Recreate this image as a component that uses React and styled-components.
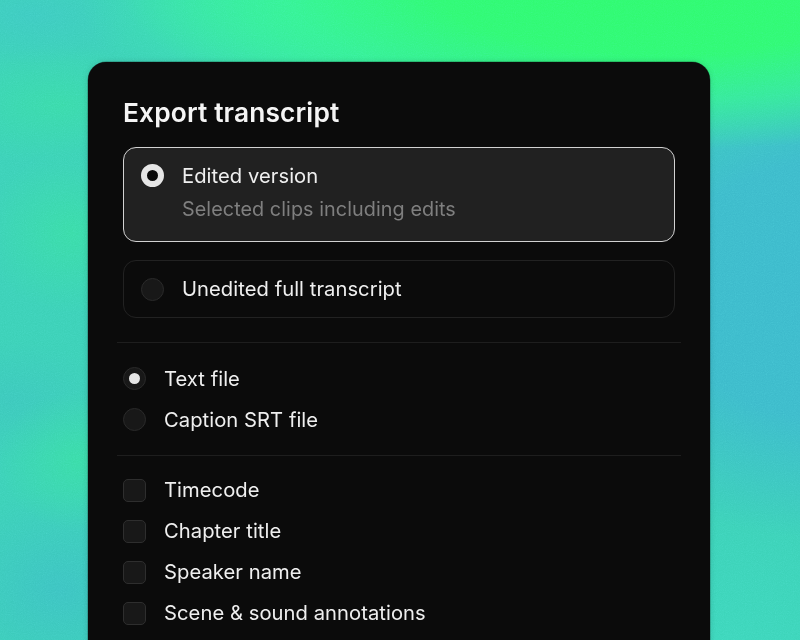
import React from "react";
import styled, { createGlobalStyle } from "styled-components";

const Global = createGlobalStyle`
  html, body { margin: 0; padding: 0; height: 100%; }
  body {
    font-family: Inter, "Noto Sans", "Liberation Sans", sans-serif;
    background: #3bd0b6;
  }
`;

const Stage = styled.div`
  position: relative;
  width: 800px;
  height: 640px;
  overflow: hidden;
  padding: 62px 90px 0 88px;
  box-sizing: border-box;
  background:
    radial-gradient(ellipse 540px 165px at 660px -15px, #2ffb6c 0%, #30fa72 42%, rgba(52, 246, 140, 0.72) 70%, rgba(52, 246, 140, 0) 100%),
    radial-gradient(ellipse 260px 120px at 340px 0px, rgba(56, 246, 160, 0.9) 0%, rgba(56, 246, 160, 0) 100%),
    radial-gradient(ellipse 340px 250px at 840px 290px, #3cb9cc 0%, #3cbaca 52%, rgba(60, 188, 200, 0) 100%),
    radial-gradient(ellipse 110px 50px at 30px 15px, rgba(62, 200, 196, 0.7) 0%, rgba(62, 200, 196, 0) 100%),
    radial-gradient(ellipse 130px 60px at 60px 105px, rgba(56, 228, 156, 0.5) 0%, rgba(56, 228, 156, 0) 100%),
    radial-gradient(ellipse 90px 80px at 72px 233px, rgba(56, 229, 154, 0.55) 0%, rgba(56, 229, 154, 0) 100%),
    radial-gradient(ellipse 80px 70px at 78px 461px, rgba(56, 229, 154, 0.55) 0%, rgba(56, 229, 154, 0) 100%),
    radial-gradient(ellipse 130px 100px at 60px 590px, rgba(60, 190, 196, 0.75) 0%, rgba(60, 190, 196, 0) 100%),
    radial-gradient(ellipse 100px 60px at 10px 400px, rgba(60, 194, 190, 0.6) 0%, rgba(60, 194, 190, 0) 100%),
    radial-gradient(ellipse 260px 140px at 720px 640px, #3cd6ba 0%, rgba(60, 214, 186, 0) 100%),
    #3bd0b6;
`;

const Grain = styled.svg`
  position: absolute;
  inset: 0;
  width: 800px;
  height: 640px;
  opacity: 0.28;
  mix-blend-mode: overlay;
`;

const Card = styled.section`
  position: relative;
  width: 622px;
  height: 620px;
  box-sizing: border-box;
  padding: 35px 35px 0;
  background: #0b0b0b;
  border-radius: 18px 18px 0 0;
  box-shadow: 0 0 0 0.5px rgba(0, 0, 0, 0.35), 0 0 6px rgba(0, 0, 0, 0.14);
  color: #f2f2f2;
`;

const Title = styled.h1`
  margin: 0 0 18px;
  font-size: 26.3px;
  line-height: 32px;
  font-weight: 600;
  letter-spacing: 0.15px;
  color: #f5f5f5;
`;

const Option = styled.div`
  box-sizing: border-box;
  height: ${(p) => (p.$selected ? "95px" : "58px")};
  margin-bottom: 18px;
  padding: ${(p) => (p.$selected ? "16px 17px" : "0 17px")};
  display: flex;
  align-items: ${(p) => (p.$selected ? "flex-start" : "center")};
  gap: 18px;
  border-radius: 13px;
  border: 1.5px solid ${(p) => (p.$selected ? "#d2d2d2" : "#222222")};
  background: ${(p) => (p.$selected ? "#212121" : "transparent")};
`;

const OptionText = styled.div`
  display: flex;
  flex-direction: column;
  gap: 9px;
`;

const Label = styled.span`
  font-size: 20.2px;
  line-height: 24px;
  font-weight: 420;
  letter-spacing: 0.05px;
  color: #efefef;
  position: relative;
  top: ${(p) => (p.$raise ? "-1px" : "0")};
`;

const Hint = styled.span`
  font-size: 19.8px;
  line-height: 24px;
  letter-spacing: 0.06px;
  color: #7f7f7f;
`;

const Radio = styled.span`
  flex: none;
  box-sizing: border-box;
  width: 23px;
  height: 23px;
  border-radius: 50%;
  display: flex;
  align-items: center;
  justify-content: center;
  background: ${(p) => (p.$variant === "strong" ? "#0b0b0b" : "#181818")};
  border: ${(p) => (p.$variant === "strong" ? "6.5px solid #e6e6e6" : "1.5px solid #2a2a2a")};
  &::after {
    content: "";
    display: ${(p) => (p.$variant === "dot" ? "block" : "none")};
    width: 11px;
    height: 11px;
    border-radius: 50%;
    background: #e6e6e6;
  }
`;

const Divider = styled.hr`
  border: 0;
  height: 1px;
  margin: ${(p) => p.$top || "0"} -6px 0;
  background: #1e1e1e;
`;

const Group = styled.div`
  display: flex;
  flex-direction: column;
  gap: 18px;
  padding: ${(p) => p.$pad};
`;

const Row = styled.label`
  display: flex;
  align-items: center;
  gap: 18px;
  height: 23px;
`;

const Check = styled.span`
  flex: none;
  box-sizing: border-box;
  width: 23px;
  height: 23px;
  border-radius: 5px;
  background: #181818;
  border: 1.5px solid #2e2e2e;
`;

export default function App() {
  return (
    <Stage>
      <Global />
      <Grain aria-hidden="true">
        <filter id="grain">
          <feTurbulence type="fractalNoise" baseFrequency="0.9" numOctaves="2" stitchTiles="stitch" />
          <feColorMatrix type="saturate" values="0" />
        </filter>
        <rect width="800" height="640" filter="url(#grain)" />
      </Grain>
      <Card>
        <Title>Export transcript</Title>
        <Option $selected>
          <Radio $variant="strong" />
          <OptionText>
            <Label>Edited version</Label>
            <Hint>Selected clips including edits</Hint>
          </OptionText>
        </Option>
        <Option>
          <Radio />
          <Label>Unedited full transcript</Label>
        </Option>
        <Divider $top="24px" />
        <Group $pad="24px 0">
          <Row><Radio $variant="dot" /><Label>Text file</Label></Row>
          <Row><Radio /><Label>Caption SRT file</Label></Row>
        </Group>
        <Divider />
        <Group $pad="23px 0 0">
          <Row><Check /><Label $raise>Timecode</Label></Row>
          <Row><Check /><Label $raise>Chapter title</Label></Row>
          <Row><Check /><Label $raise>Speaker name</Label></Row>
          <Row><Check /><Label $raise>Scene &amp; sound annotations</Label></Row>
        </Group>
      </Card>
    </Stage>
  );
}
